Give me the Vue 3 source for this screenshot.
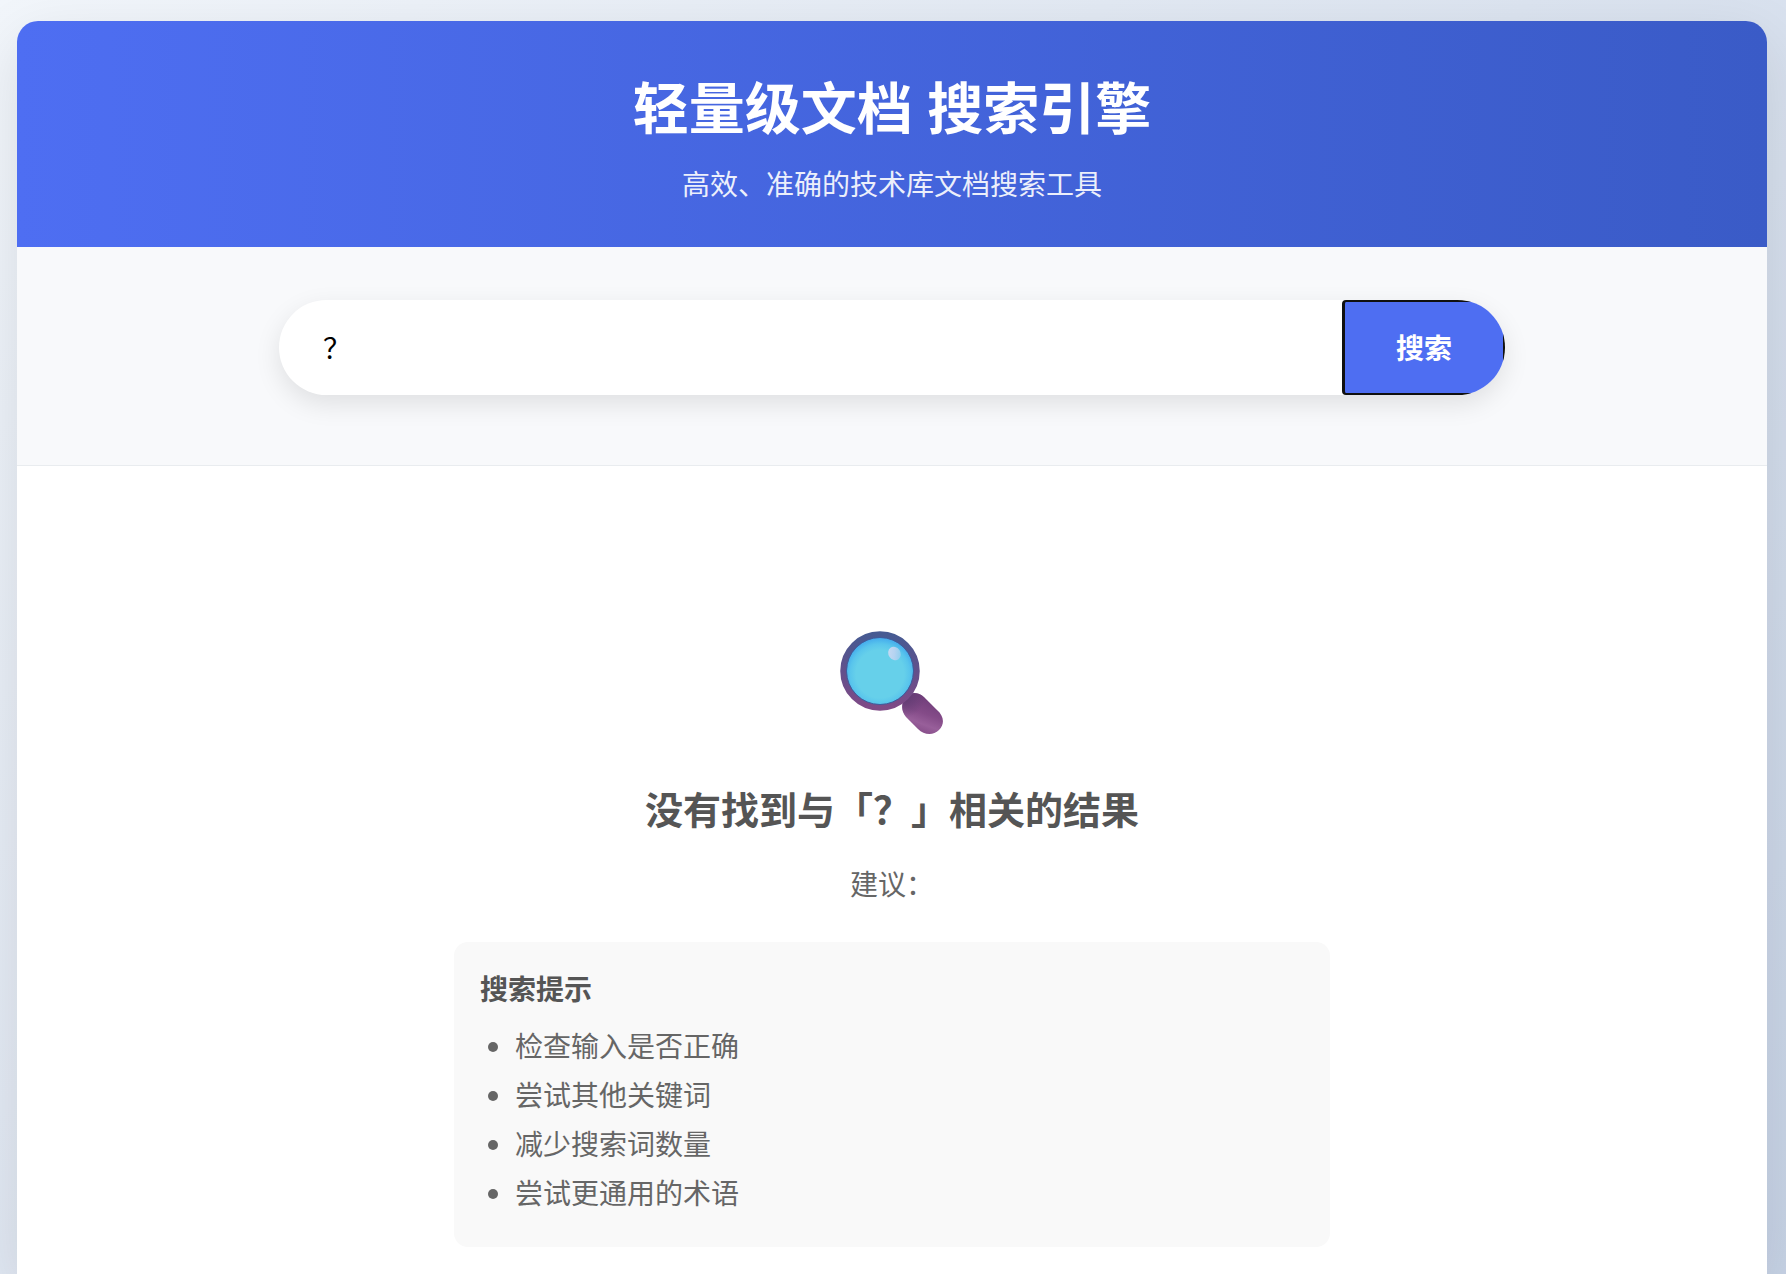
<script setup>
import { ref } from 'vue'

const query = ref('？')
const searched = ref('？')
const tips = ['检查输入是否正确', '尝试其他关键词', '减少搜索词数量', '尝试更通用的术语']

function search() {
  searched.value = query.value
}
</script>

<template>
  <div class="page">
    <div class="container">
      <header class="header">
        <h1>轻量级文档 搜索引擎</h1>
        <p>高效、准确的技术库文档搜索工具</p>
      </header>

      <section class="search-section">
        <form class="search-box" @submit.prevent="search">
          <input v-model="query" type="text" aria-label="搜索内容" />
          <button type="submit">搜索</button>
        </form>
      </section>

      <main class="results">
        <svg class="magnifier" viewBox="0 0 104 104" aria-hidden="true">
          <defs>
            <linearGradient id="rim" x1="0" y1="0" x2="0" y2="1">
              <stop offset="0" stop-color="#465a92" />
              <stop offset="0.5" stop-color="#62508b" />
              <stop offset="1" stop-color="#7f4a86" />
            </linearGradient>
            <radialGradient id="lens" cx="0.5" cy="0.54" r="0.5">
              <stop offset="0.66" stop-color="#66d0ea" />
              <stop offset="0.82" stop-color="#59c5ec" />
              <stop offset="1" stop-color="#42a9ed" />
            </radialGradient>
            <linearGradient id="shine" x1="0" y1="0" x2="1" y2="1">
              <stop offset="0" stop-color="#cbdcf3" />
              <stop offset="0.5" stop-color="#b5d3f1" />
              <stop offset="1" stop-color="#82cdee" />
            </linearGradient>
            <linearGradient id="grip" x1="0.7" y1="0.1" x2="0.4" y2="0.9">
              <stop offset="0" stop-color="#6f3d79" />
              <stop offset="0.5" stop-color="#844b88" />
              <stop offset="0.8" stop-color="#985f9a" />
              <stop offset="1" stop-color="#8a518d" />
            </linearGradient>
            <radialGradient id="gripShade" cx="0.05" cy="0.1" r="0.5">
              <stop offset="0" stop-color="#5c3a70" stop-opacity="0.9" />
              <stop offset="1" stop-color="#5c3a70" stop-opacity="0" />
            </radialGradient>
          </defs>
          <g>
            <path d="M65 67C69 61 78 60 84 66L97 79C104 85 105 93 99 99C93 105 84 104 78 98L66 86C61 80 61 73 65 67Z" fill="url(#grip)" />
            <path d="M65 67C69 61 78 60 84 66L97 79C104 85 105 93 99 99C93 105 84 104 78 98L66 86C61 80 61 73 65 67Z" fill="url(#gripShade)" />
          </g>
          <circle cx="40" cy="40" r="36.5" fill="url(#lens)" stroke="url(#rim)" stroke-width="6.5" />
          <circle cx="40" cy="40" r="33.5" fill="none" stroke="#3d5d9d" stroke-width="1" />
          <ellipse cx="54.5" cy="22.5" rx="6" ry="7" transform="rotate(-35 54.5 22.5)" fill="url(#shine)" />
        </svg>
        <h2>没有找到与「{{ searched }}」相关的结果</h2>
        <p>建议：</p>
        <section class="tips">
          <h3>搜索提示</h3>
          <ul>
            <li v-for="tip in tips" :key="tip">{{ tip }}</li>
          </ul>
        </section>
      </main>
    </div>
  </div>
</template>

<style>
body {
  margin: 0;
}
</style>

<style scoped>
.page {
  box-sizing: border-box;
  display: flex;
  justify-content: center;
  min-height: 100vh;
  padding: 21px 19px 0 17px;
  overflow: hidden;
  background: linear-gradient(135deg, #f2f6fb 0%, #c6d2e5 100%);
  font-family: "Noto Sans", "Noto Sans CJK SC", sans-serif;
  font-size: 28px;
  line-height: 42px;
  color: #666;
}

h1, h2, h3, p, ul {
  margin: 0;
}

.container {
  width: 100%;
  max-width: 1750px;
  overflow: hidden;
  border-radius: 21px 21px 0 0;
  background: #fff;
  box-shadow: 0 18px 60px rgba(0, 0, 0, 0.1);
}

.header {
  padding: 44px 35px 42px;
  background: linear-gradient(90deg, #4e6ef2, #3a5bc7);
  color: #fff;
  text-align: center;
}

h1 {
  margin-bottom: 14px;
  font-size: 56px;
  line-height: 84px;
}

.header p {
  opacity: 0.9;
}

.search-section {
  padding: 53px 35px 70px;
  border-bottom: 1px solid #e9ecef;
  background: #f8f9fb;
}

.search-box {
  display: flex;
  max-width: 1226px;
  height: 95px;
  margin: 0 auto;
  overflow: hidden;
  border-radius: 48px;
  background: #fff;
  box-shadow: 0 9px 26px rgba(0, 0, 0, 0.1);
}

input {
  flex: 1;
  min-width: 0;
  padding: 0 44px;
  border: 0;
  outline: 0;
  background: transparent;
  font: inherit;
  color: #000;
}

button {
  padding: 0 51px;
  border: 2px solid #101010;
  border-left-width: 3px;
  border-radius: 4px;
  background: #4e6ef2;
  font: inherit;
  font-weight: 700;
  color: #fff;
  cursor: pointer;
}

.results {
  display: flex;
  flex-direction: column;
  align-items: center;
  padding: 165px 35px 26px;
}

.magnifier {
  width: 104px;
  height: 104px;
  margin-bottom: 45px;
}

h2 {
  margin-bottom: 25px;
  font-size: 38px;
  line-height: 58px;
  color: #555;
}

.tips {
  box-sizing: border-box;
  width: 100%;
  max-width: 876px;
  margin-top: 37px;
  padding: 26px 26px 33px;
  border-radius: 14px;
  background: #f9f9f9;
}

h3 {
  margin-bottom: 15px;
  font-size: 28px;
  line-height: 42px;
  color: #555;
}

ul {
  display: flex;
  flex-direction: column;
  gap: 7px;
  padding-left: 35px;
}
</style>
